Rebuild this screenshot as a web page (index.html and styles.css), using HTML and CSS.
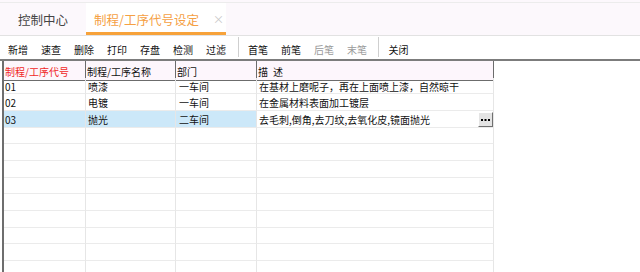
FILE: index.html
```html
<!DOCTYPE html>
<html lang="zh-CN">
<head>
    <meta charset="UTF-8">
    <title>制程/工序代号设定</title>
    <link rel="stylesheet" href="styles.css">
</head>
<body>
    <div class="top">
        <div class="tabbar">
            <div class="tab">控制中心</div>
            <div class="tab active">制程/工序代号设定<span class="close">×</span></div>
        </div>
    </div>

    <div class="toolbar">
        <span class="btn">新增</span>
        <span class="btn">速查</span>
        <span class="btn">删除</span>
        <span class="btn">打印</span>
        <span class="btn">存盘</span>
        <span class="btn">检测</span>
        <span class="btn">过滤</span>
        <span class="sep"></span>
        <span class="btn">首笔</span>
        <span class="btn">前笔</span>
        <span class="btn off">后笔</span>
        <span class="btn off">末笔</span>
        <span class="sep last"></span>
        <span class="btn">关闭</span>
    </div>

    <div class="gridwrap">
        <div class="grid">
            <div class="hd key">制程/工序代号</div>
            <div class="hd">制程/工序名称</div>
            <div class="hd">部门</div>
            <div class="hd">描&ensp;述</div>

            <div class="cell">01</div>
            <div class="cell">喷漆</div>
            <div class="cell">一车间</div>
            <div class="cell">在基材上磨呢子，再在上面喷上漆，自然晾干</div>

            <div class="cell">02</div>
            <div class="cell">电镀</div>
            <div class="cell">一车间</div>
            <div class="cell">在金属材料表面加工镀层</div>

            <div class="cell sel">03</div>
            <div class="cell sel">抛光</div>
            <div class="cell sel">二车间</div>
            <div class="cell edit">去毛刺,倒角,去刀纹,去氧化皮,镜面抛光
                <span class="more">
                    <svg width="13" height="13" viewBox="0 0 13 13">
                        <rect x="2" y="6" width="2" height="2" fill="#000"/>
                        <rect x="5.5" y="6" width="2" height="2" fill="#000"/>
                        <rect x="9" y="6" width="2" height="2" fill="#000"/>
                    </svg>
                </span>
            </div>

            <div class="cell"></div><div class="cell"></div><div class="cell"></div><div class="cell"></div>
            <div class="cell"></div><div class="cell"></div><div class="cell"></div><div class="cell"></div>
            <div class="cell"></div><div class="cell"></div><div class="cell"></div><div class="cell"></div>
            <div class="cell"></div><div class="cell"></div><div class="cell"></div><div class="cell"></div>
            <div class="cell"></div><div class="cell"></div><div class="cell"></div><div class="cell"></div>
            <div class="cell"></div><div class="cell"></div><div class="cell"></div><div class="cell"></div>
            <div class="cell"></div><div class="cell"></div><div class="cell"></div><div class="cell"></div>
            <div class="cell"></div><div class="cell"></div><div class="cell"></div><div class="cell"></div>
            <div class="cell"></div><div class="cell"></div><div class="cell"></div><div class="cell"></div>
        </div>
    </div>
</body>
</html>
```

FILE: styles.css
```css
/* Base */
* {
    margin: 0;
    padding: 0;
    box-sizing: border-box;
}
body {
    font-family: "Noto Sans CJK SC", "Noto Sans", sans-serif;
    background: #fff;
    color: #222;
    overflow: hidden;
}

/* Tab bar */
.top {
    background: #fcf8fc;
    padding-top: 2px;
}
.tabbar {
    display: flex;
    height: 34px;
    border-top: 1px solid #ececec;
    border-bottom: 1px solid #e2e2e2;
}
.tab {
    width: 86px;
    display: flex;
    align-items: center;
    justify-content: center;
    font-size: 12.5px;
    color: #444;
}
.tab.active {
    width: 140px;
    background: #fff;
    color: #f5a043;
    border-bottom: 3px solid #f7a23a;
    justify-content: flex-start;
    padding-left: 8px;
    padding-top: 3px;
}
.close {
    color: #c8c8c8;
    font-size: 11px;
    margin-left: 14px;
}

/* Toolbar */
.toolbar {
    display: flex;
    align-items: center;
    height: 23px;
    padding: 4px 0 0 1.5px;
    font-size: 10px;
}
.btn {
    padding: 0 6.5px;
    color: #111;
}
.btn.off {
    color: #9a9a9a;
}
.sep {
    width: 1px;
    height: 20px;
    background: #cfcfcf;
    margin: -5px 3px 0 5px;
}
.sep.last {
    margin: -5px 3px 0 4.5px;
}

/* Grid */
.gridwrap {
    border-top: 2px solid #7c7c7c;
    padding-left: 2px;
}
.grid {
    display: grid;
    grid-template-columns: 82px 90px 81px 237px;
    grid-auto-rows: 16.67px;
    border-left: 2px solid #6e6e6e;
    width: 492px;
    font-size: 10px;
    color: #111;
}
.hd {
    height: 20px;
    background: #fdf6fc;
    border-right: 1px solid #6c6c6c;
    border-bottom: 1px solid #6c6c6c;
    padding: 3px 0 0 1px;
}
.hd.key {
    color: #f02828;
}
.cell {
    border-right: 1px solid #e6e6e6;
    border-bottom: 1px solid #ebebeb;
    padding: 2px 0 0 1px;
    white-space: nowrap;
    line-height: 13px;
}
.cell:nth-child(4n+2) {
    padding-left: 2px;
}
.cell:nth-child(4n+3) {
    padding-left: 3px;
}
.cell:nth-child(4n) {
    padding-left: 2px;
}
.cell.sel {
    background: #cce8f9;
}
.cell.edit {
    display: flex;
    justify-content: space-between;
    align-items: flex-start;
}
.more {
    display: block;
    width: 15px;
    height: 15px;
    margin-top: -1px;
    background: #e4e4e4;
    border: 1px solid #fff;
    border-right-color: #707070;
    border-bottom-color: #707070;
}
.more svg {
    display: block;
}
```
